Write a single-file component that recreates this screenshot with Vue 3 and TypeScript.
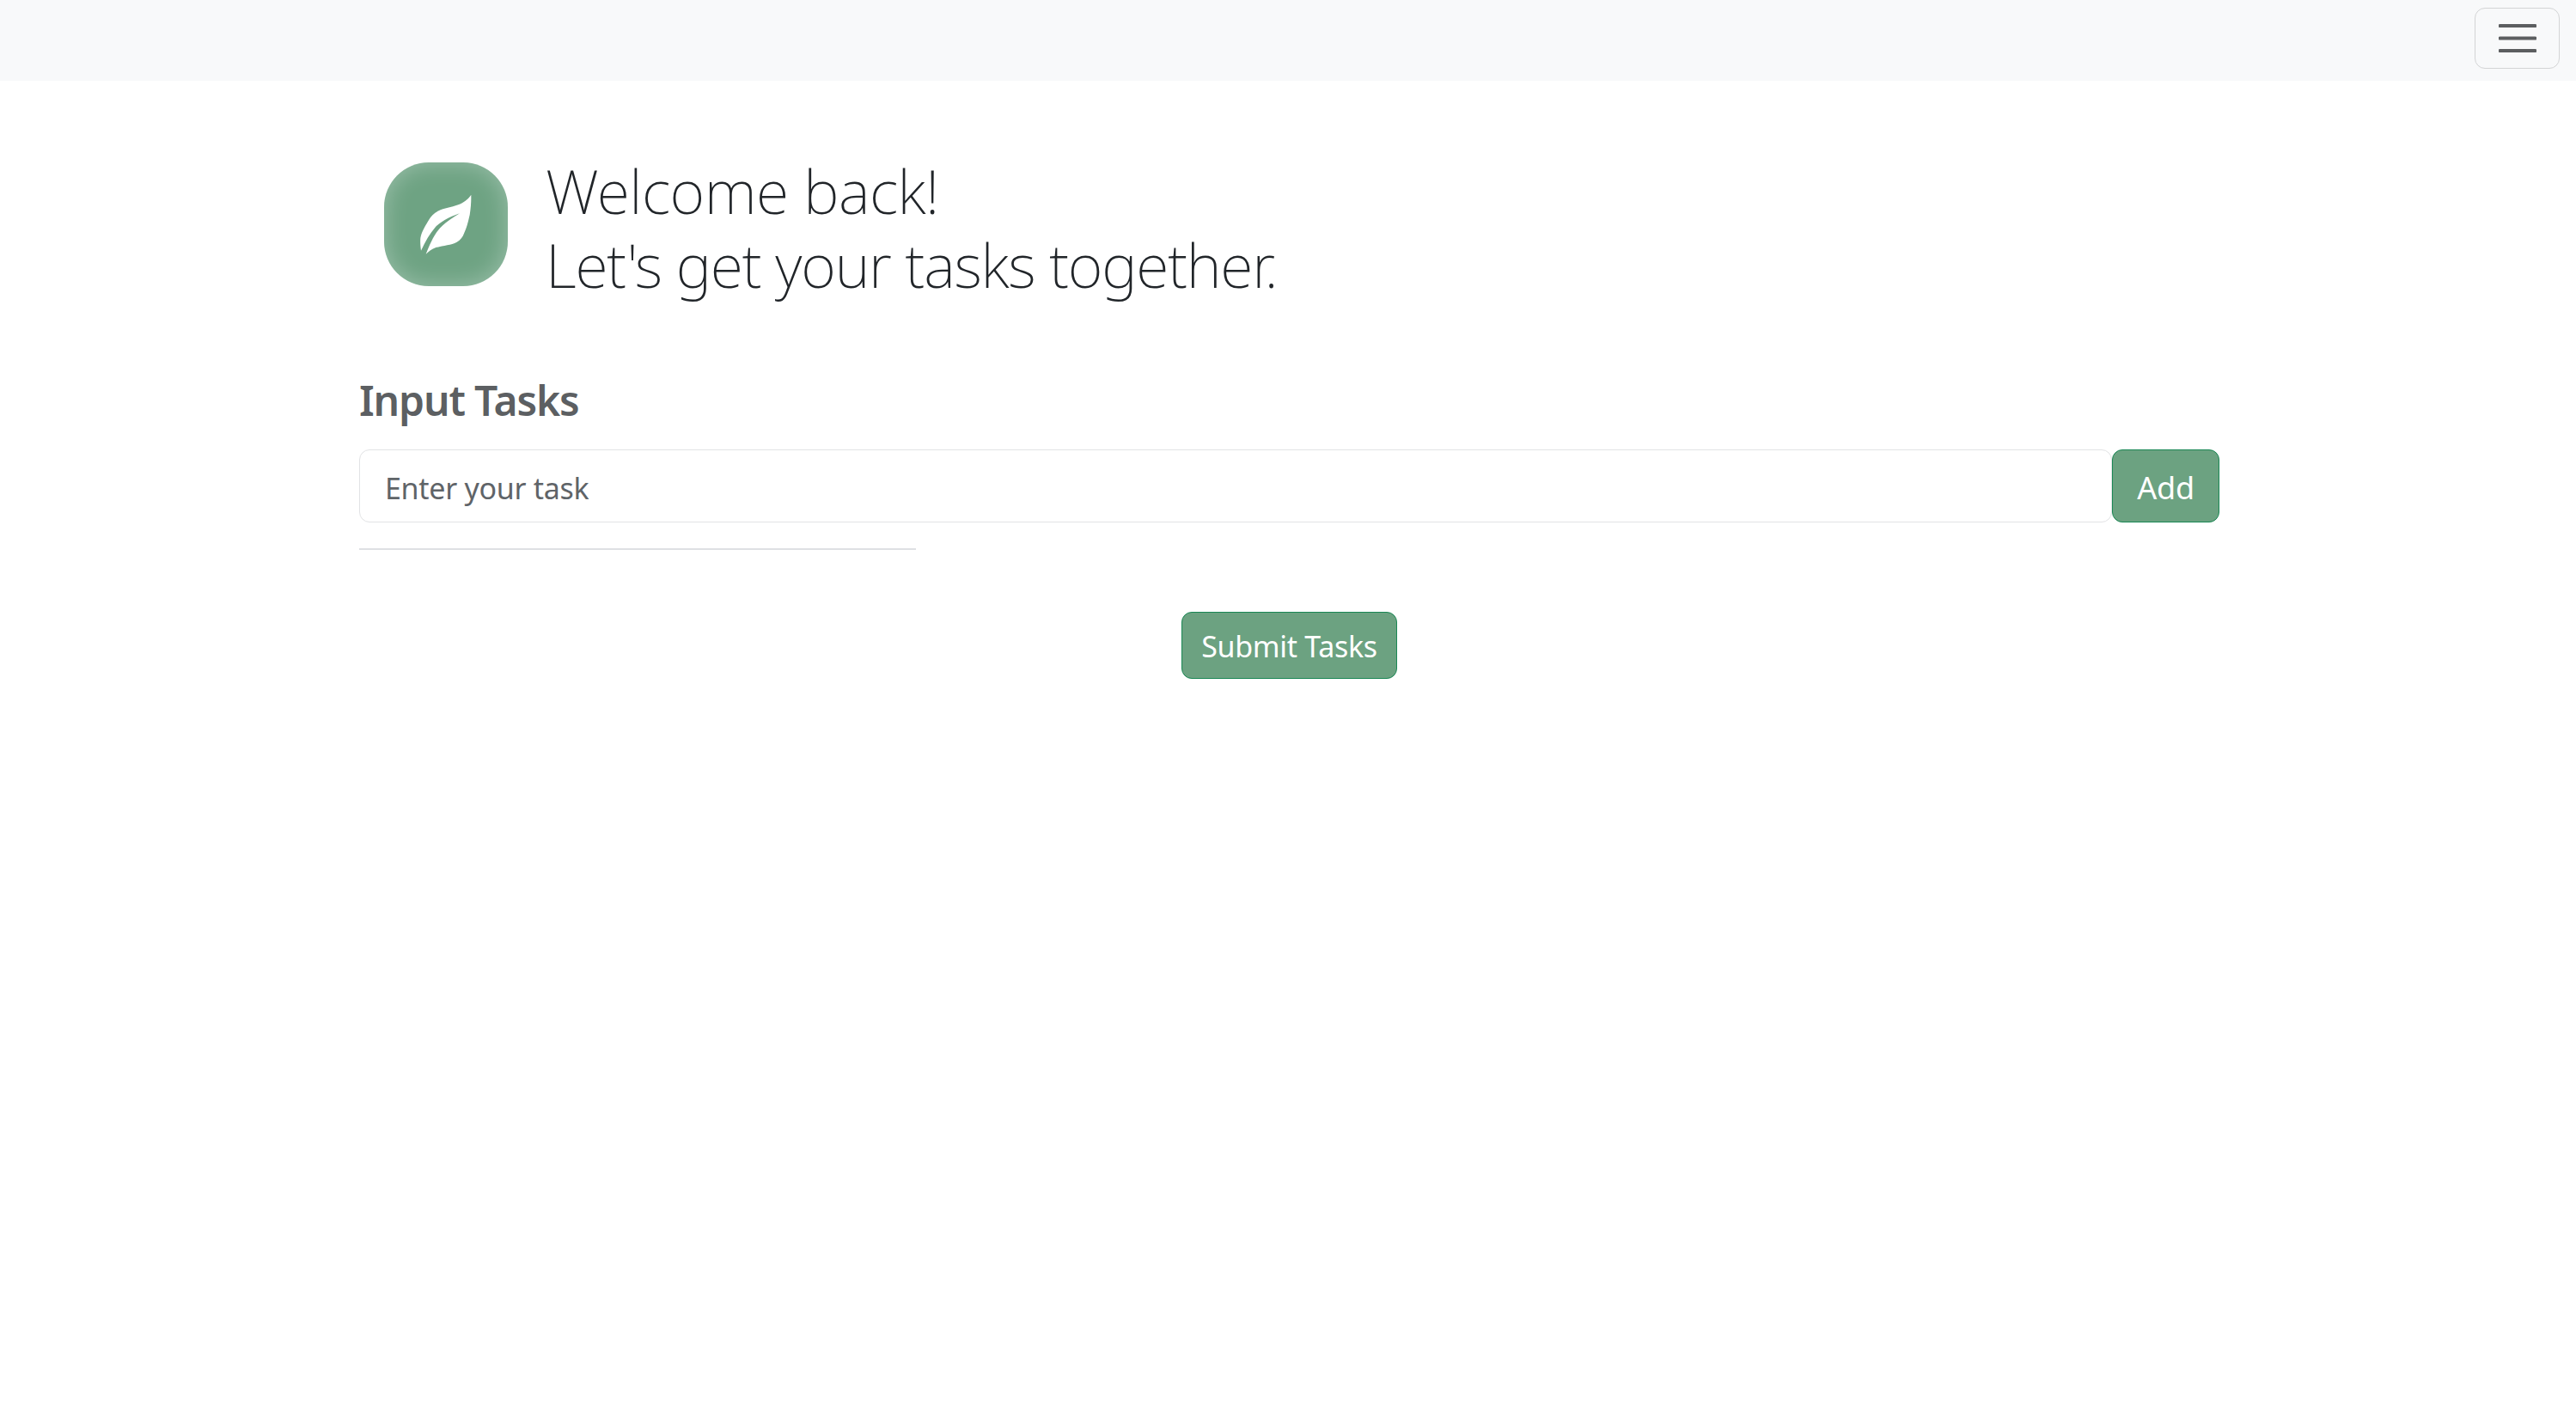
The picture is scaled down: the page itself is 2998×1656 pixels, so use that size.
<script setup lang="ts">
import { ref } from 'vue'

const task = ref('')
const tasks = ref<string[]>([])

const addTask = () => {
  if (!task.value.trim()) return
  tasks.value.push(task.value.trim())
  task.value = ''
}
</script>

<template>
  <nav class="navbar">
    <button class="toggler" type="button" aria-label="Toggle navigation">
      <svg class="toggler-icon" viewBox="0 0 44 33">
        <path d="M1.5 2H42.5M1.5 16.5H42.5M1.5 31H42.5" />
      </svg>
    </button>
  </nav>

  <main class="container">
    <header class="welcome">
      <div class="logo">
        <svg viewBox="0 0 144 144">
          <path
            d="M101.3 37.7C97 44 92 47 86.3 49.3C78 52.5 70 53 63 56.5C56 60 53 65 49.7 71C45 79 42.5 84 42.2 90C42 95 42.5 99 43 102.7C48 92 53 83 60 75C67 68 77 63 88 59.3C80 64 71 70 65 76.5C58 84 53 96 48.7 106.7C52 103.5 55 101 59.7 99.3C68 96.5 78 96.5 84.7 92.7C89 90 91.5 87 93 82.7C97 74 98 68 99.7 61C101 53 101.5 45 101.3 37.7Z"
          />
        </svg>
      </div>
      <h1 class="welcome-text">
        <span class="line-one">Welcome back!</span>
        <span class="line-two">Let's get your tasks together.</span>
      </h1>
    </header>

    <h2 class="section-title">Input Tasks</h2>
    <form class="input-row" @submit.prevent="addTask">
      <input v-model="task" class="task-input" type="text" placeholder="Enter your task" />
      <button class="btn add-btn" type="submit">Add</button>
    </form>
    <hr class="divider" />
    <ul v-if="tasks.length" class="task-list">
      <li v-for="t in tasks" :key="t">{{ t }}</li>
    </ul>

    <div class="submit-row">
      <button class="btn submit-btn" type="button">Submit Tasks</button>
    </div>
  </main>
</template>

<style>
html,
body {
  margin: 0;
  background: #fff;
}
</style>

<style scoped>
.navbar {
  display: flex;
  justify-content: flex-end;
  align-items: flex-start;
  box-sizing: border-box;
  height: 94px;
  padding: 9px 19px 0 0;
  background: #f8f9fa;
}
.toggler {
  display: flex;
  align-items: center;
  justify-content: center;
  box-sizing: border-box;
  width: 99px;
  height: 71px;
  padding: 0;
  background: transparent;
  border: 1px solid #d3d4d5;
  border-radius: 12px;
}
.toggler-icon {
  width: 44px;
  height: 33px;
}
.toggler-icon path {
  fill: none;
  stroke: #5c5e60;
  stroke-width: 4px;
  stroke-linecap: round;
}
.container {
  box-sizing: border-box;
  width: 2165px;
  margin-left: 418px;
  font-family: "Noto Sans", "Open Sans", sans-serif;
  color: #212529;
}
.welcome {
  display: flex;
  align-items: flex-start;
  padding: 95px 0 0 29px;
}
.logo {
  flex: none;
  width: 144px;
  height: 144px;
  border-radius: 52px;
  background: #6ea383;
  box-shadow: inset 0 0 28px rgba(255, 255, 255, 0.32);
}
.logo svg {
  display: block;
  width: 144px;
  height: 144px;
}
.logo path {
  fill: #fff;
}
.welcome-text {
  margin: -10px 0 0 44px;
  font-size: 70px;
  line-height: 86px;
  font-weight: 200;
}
.welcome-text span {
  display: block;
}
.line-one {
  letter-spacing: -0.55px;
}
.line-two {
  letter-spacing: -1.27px;
}
.section-title {
  margin: 86px 0 0;
  font-size: 48px;
  line-height: 58px;
  font-weight: 600;
  letter-spacing: -1.15px;
  color: #5c5f62;
}
.input-row {
  display: flex;
  margin-top: 28px;
}
.task-input {
  flex: 1;
  box-sizing: border-box;
  min-width: 0;
  height: 85px;
  padding: 4px 29px 0;
  font-family: inherit;
  font-size: 34px;
  letter-spacing: -0.3px;
  color: #212529;
  background: #fff;
  border: 1px solid #e2e3e5;
  border-radius: 12px;
  outline: none;
}
.task-input::placeholder {
  color: #5f6468;
  opacity: 1;
}
.btn {
  box-sizing: border-box;
  font-family: inherit;
  color: #fff;
  background: #6ca281;
  border: 1px solid #198754;
  border-radius: 12px;
}
.add-btn {
  flex: none;
  width: 125px;
  height: 85px;
  padding: 4px 0 0;
  font-size: 36px;
  letter-spacing: -0.2px;
}
.divider {
  width: 648px;
  height: 2px;
  margin: 30px 0 0;
  border: 0;
  background: #dee0e3;
}
.task-list {
  margin: 16px 0 0;
  padding-left: 40px;
  font-size: 32px;
}
.submit-row {
  display: flex;
  justify-content: center;
  margin-top: 72px;
}
.submit-btn {
  width: 251px;
  height: 78px;
  padding: 2px 0 0;
  font-size: 34px;
  letter-spacing: -0.3px;
}
</style>
